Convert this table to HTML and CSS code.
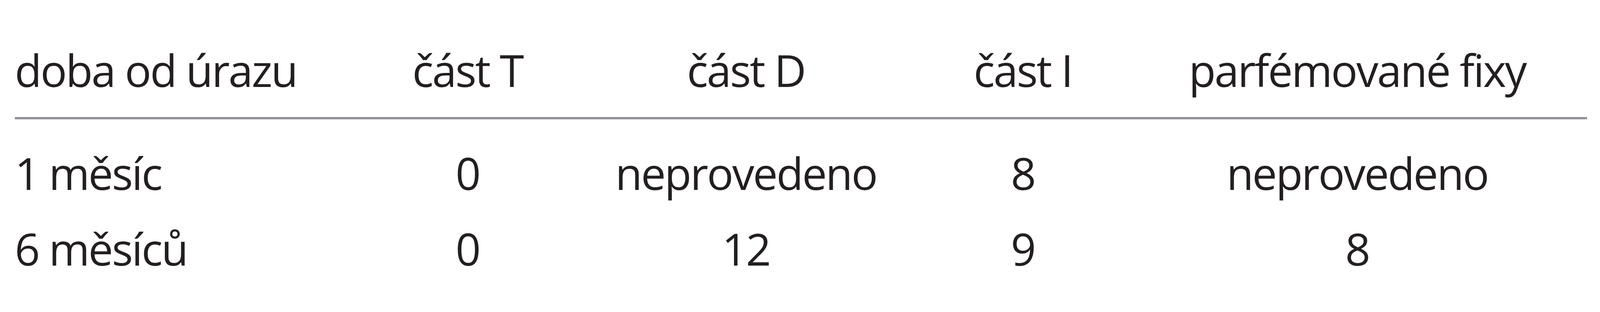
FILE: index.html
```html
<!DOCTYPE html>
<html lang="cs">
<head>
<meta charset="utf-8">
<title>Tabulka</title>
<link rel="stylesheet" href="styles.css">
</head>
<body>
<div class="table">
  <div class="row head">
    <div class="cell first">doba od úrazu</div>
    <div class="cell">část T</div>
    <div class="cell">část D</div>
    <div class="cell">část I</div>
    <div class="cell">parfémované fixy</div>
  </div>
  <div class="row">
    <div class="cell first">1 měsíc</div>
    <div class="cell">0</div>
    <div class="cell">neprovedeno</div>
    <div class="cell">8</div>
    <div class="cell">neprovedeno</div>
  </div>
  <div class="row">
    <div class="cell first">6 měsíců</div>
    <div class="cell">0</div>
    <div class="cell">12</div>
    <div class="cell">9</div>
    <div class="cell">8</div>
  </div>
</div>
</body>
</html>
```
FILE: styles.css
```css
html, body {
  margin: 0;
  padding: 0;
  background: #ffffff;
}

body {
  font-family: "Open Sans", "Noto Sans", sans-serif;
  font-size: 2.762vw;
  color: #231f20;
}

/* Horizontal geometry follows the window width (reference: 5431px wide),
   vertical geometry follows the 800px tall frame. */
.table {
  margin-left: 0.921vw;
  width: 98.27vw;
}

.row {
  display: grid;
  grid-template-columns: 21.672vw 13.257vw 21.543vw 13.073vw 28.724vw;
  height: 194px;
  white-space: nowrap;
}

.cell {
  text-align: center;
  line-height: 1em;
  letter-spacing: -0.03em;
  /* puts the baseline 181px below the top of the row */
  padding-top: calc(181px - 0.888em);
}

.cell.first {
  text-align: left;
}

.head {
  height: 300px;
  border-bottom: 6px solid #939598;
}

.head .cell {
  /* header baseline sits 223px from the top of the page */
  padding-top: calc(223px - 0.888em);
}
```
